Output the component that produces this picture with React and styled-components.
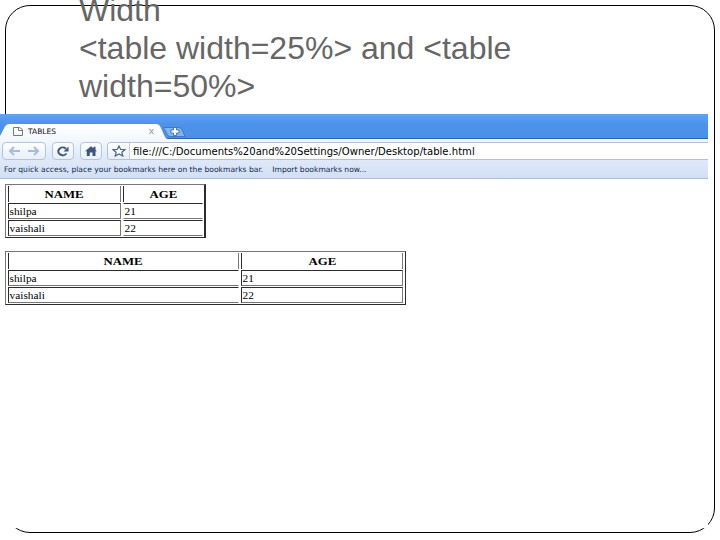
import React from "react";
import styled, { createGlobalStyle } from "styled-components";

const people = [
  { name: "shilpa", age: 21 },
  { name: "vaishali", age: 22 },
];

const TabStrip = () => (
  <TabDrawing viewBox="0 0 190 25" width="190" height="25">
    <defs>
      <linearGradient id="tabFill" x1="0" y1="0" x2="0" y2="1">
        <stop offset="0" stopColor="#ffffff" />
        <stop offset="1" stopColor="#f3f8fe" />
      </linearGradient>
    </defs>
    <path
      d="M0 22 L5 12.500 Q6 10 9 10 H156 Q159 10 160.500 13 L165 23 Q166 25 168 25 H0 Z"
      fill="url(#tabFill)"
    />
    <path
      d="M163.500 13.500 H179 Q181 13.500 182 16 L185 22.500 H170 Q168 22.500 167 20 Z"
      fill="#7fb4f3"
      stroke="#3a70bd"
      strokeWidth="0.8"
    />
    <path
      d="M173.500 13.500 h3 v2.500 h2.500 v3 h-2.500 v2.500 h-3 v-2.500 h-2.500 v-3 h2.500 z"
      fill="#ffffff"
      stroke="#3a62a0"
      strokeWidth="0.8"
    />
    <path
      d="M13.500 13.500 H19.500 L22.500 15.500 V21.500 H13.500 Z M18.500 13.500 V16.500 H22.500"
      fill="#ffffff"
      stroke="#777777"
    />
    <path
      d="M149.500 15 l4 5 M153.500 15 l-4 5"
      stroke="#999fa8"
      strokeWidth="1.1"
    />
  </TabDrawing>
);

const ArrowIcon = ({ flip }) => (
  <svg width="13" height="10" viewBox="0 0 13 10">
    <path
      d="M6 1 L2 5 L6 9 M2 5 H12"
      fill="none"
      stroke="#a9bbd8"
      strokeWidth="2"
      transform={flip ? "translate(13 0) scale(-1 1)" : undefined}
    />
  </svg>
);

const ReloadIcon = () => (
  <svg width="14" height="11" viewBox="0 0 14 11">
    <path
      d="M10.500 7.500 A4.500 3.800 0 1 1 9.800 2.600"
      fill="none"
      stroke="#3f5580"
      strokeWidth="2"
    />
    <path d="M12.500 0.500 V5.500 H7.500 Z" fill="#3f5580" />
  </svg>
);

const HomeIcon = () => (
  <svg width="14" height="10" viewBox="0 0 14 10">
    <path
      d="M7 0.300 L9.500 2.200 V0.800 H11.500 V3.800 L13 5.200 H11.500 V10 H8.500 V6.500 H5.800 V10 H2.800 V5.200 H1 Z"
      fill="#3f5580"
    />
  </svg>
);

const StarIcon = () => (
  <svg width="14" height="12" viewBox="0 0 14 12">
    <path
      d="M7 1 L8.700 4.400 L13 4.700 L9.800 7.200 L10.800 11 L7 9 L3.200 11 L4.200 7.200 L1 4.700 L5.300 4.400 Z"
      fill="#ffffff"
      stroke="#48608c"
      strokeWidth="1.2"
    />
  </svg>
);

const PeopleTable = ({ columns, wide }) => (
  <TableFrame $columns={columns} $wide={wide}>
    <HeadCell>
      <span>NAME</span>
    </HeadCell>
    <HeadCell $last={!wide}>
      <span>AGE</span>
    </HeadCell>
    {people.map((person) => (
      <React.Fragment key={person.name}>
        <DataCell $openRight={wide}>
          <span>{person.name}</span>
        </DataCell>
        <DataCell $openLeft={!wide} $openRight={!wide}>
          <span>{person.age}</span>
        </DataCell>
      </React.Fragment>
    ))}
  </TableFrame>
);

const App = () => {
  return (
    <Slide>
      <GlobalStyle />
      <SlideBorder />
      <Title>
        Width
        <br />
        &lt;table width=25%&gt; and &lt;table
        <br />
        width=50%&gt;
      </Title>
      <BrowserWindow>
        <TitleBar>
          <TabStrip />
          <TabTitle>TABLES</TabTitle>
        </TitleBar>
        <Toolbar>
          <ButtonGroup $width={44}>
            <ArrowIcon />
            <ArrowIcon flip />
          </ButtonGroup>
          <ButtonGroup $width={22}>
            <ReloadIcon />
          </ButtonGroup>
          <ButtonGroup $width={22}>
            <HomeIcon />
          </ButtonGroup>
          <AddressBar>
            <StarHolder>
              <StarIcon />
            </StarHolder>
            <Address>
              <span>
                file:///C:/Documents%20and%20Settings/Owner/Desktop/table.html
              </span>
            </Address>
          </AddressBar>
        </Toolbar>
        <BookmarksBar>
          <BookmarkText>
            For quick access, place your bookmarks here on the bookmarks bar.
          </BookmarkText>
          <BookmarkText>Import bookmarks now...</BookmarkText>
        </BookmarksBar>
        <Page>
          <PeopleTable columns="113px 80px" />
          <PeopleTable columns="231px 162px" wide />
        </Page>
      </BrowserWindow>
    </Slide>
  );
};

const GlobalStyle = createGlobalStyle`
  body {
    margin: 0;
    background: #fff;
    overflow: hidden;
  }
  * {
    box-sizing: border-box;
  }
`;

const Slide = styled.main`
  width: 720px;
  height: 540px;
  position: relative;
  overflow: hidden;
  background: #fff;
  display: flex;
  flex-direction: column;
`;
// rounded outline behind the whole slide
const SlideBorder = styled.div`
  position: absolute;
  top: 5px;
  left: 5px;
  right: 5px;
  bottom: 7px;
  border: 1px solid #000;
  border-radius: 25px;
`;
// the first line runs off the top of the slide
const Title = styled.h1`
  position: relative;
  flex: none;
  height: 123.4px;
  margin: -9.4px 0 0 79px;
  color: #666;
  font: 400 32px/38.4px "Liberation Sans", Arial, sans-serif;
  white-space: nowrap;
`;
const BrowserWindow = styled.section`
  position: relative;
  width: 708px;
  height: 414px;
  background: #fff;
  overflow: hidden;
  display: flex;
  flex-direction: column;
`;
const TitleBar = styled.header`
  flex: none;
  height: 25px;
  position: relative;
  background: linear-gradient(#62a2f2, #4c92ea 45%, #4b91e8);
  border-bottom: 1px solid #2f62ad;
`;
const TabDrawing = styled.svg`
  display: block;
`;
const TabTitle = styled.span`
  position: absolute;
  left: 28px;
  top: 12px;
  color: #111;
  font: 7.5px/11px "DejaVu Sans", sans-serif;
`;
const Toolbar = styled.div`
  flex: none;
  height: 21px;
  padding: 3px 0 0 2px;
  display: flex;
  align-items: flex-start;
  gap: 6px;
  background: linear-gradient(#f3f8fe, #dce8f8);
`;
const ButtonGroup = styled.div`
  width: ${({ $width }) => $width}px;
  height: 18px;
  flex: none;
  border: 1px solid #b4c4dc;
  border-radius: 4px;
  background: linear-gradient(#fdfeff, #e7effa);
  display: flex;
  align-items: center;
  justify-content: space-evenly;
`;
const AddressBar = styled.div`
  flex: 1;
  height: 18px;
  margin-left: -1px;
  border: 1px solid #b4bfd2;
  border-right: 0;
  border-radius: 4px 0 0 4px;
  background: #fff;
  display: flex;
  overflow: hidden;
`;
const StarHolder = styled.div`
  width: 22px;
  flex: none;
  background: linear-gradient(#fdfeff, #e7effa);
  border-right: 1px solid #c5d0e1;
  display: flex;
  align-items: center;
  justify-content: center;
`;
const Address = styled.div`
  padding-left: 3px;
  color: #000;
  font: 10px/17px "DejaVu Sans", sans-serif;
  white-space: nowrap;
  span {
    display: inline-block;
    transform: scaleX(1.008);
    transform-origin: left;
  }
`;
const BookmarksBar = styled.div`
  flex: none;
  height: 19px;
  padding: 1px 0 0 4px;
  display: flex;
  align-items: center;
  gap: 9px;
  background: linear-gradient(#dfe9f8, #d2e0f5);
  border-bottom: 1px solid #aebdd3;
`;
const BookmarkText = styled.span`
  color: #16294f;
  font: 7.6px/12px "DejaVu Sans", sans-serif;
  white-space: nowrap;
`;
const Page = styled.div`
  padding: 5px;
  display: flex;
  flex-direction: column;
  align-items: flex-start;
  gap: 13px;
`;
const TableFrame = styled.div`
  display: grid;
  grid-template-columns: ${({ $columns }) => $columns};
  grid-auto-rows: 16px;
  gap: 1px 2px;
  padding: ${({ $wide }) => ($wide ? "1px 2px 1px 2px" : "1px 1px 1px 2px")};
  border-style: solid;
  border-color: #777 #2c2c2c #2c2c2c #777;
  border-width: ${({ $wide }) => ($wide ? "1px" : "1px 2px 1px 1px")};
  color: #000;
  font: 10.5px/14px "Liberation Serif", "Times New Roman", serif;
`;
const HeadCell = styled.div`
  border-left: 1px solid #2c2c2c;
  border-right: ${({ $last }) => ($last ? "0" : "1px solid #777")};
  font-weight: 700;
  line-height: 18px;
  text-align: center;
  span {
    display: inline-block;
    transform: scaleX(1.22);
  }
`;
const DataCell = styled.div`
  border: 1px solid;
  border-color: #2c2c2c #777 #777 #2c2c2c;
  line-height: 16px;
  ${({ $openLeft }) => $openLeft && "border-left-color: transparent;"}
  ${({ $openRight }) => $openRight && "border-right-color: transparent;"}
  span {
    display: inline-block;
    padding-left: 0.5px;
    transform: scaleX(1.08);
    transform-origin: left;
  }
`;

export default App;
